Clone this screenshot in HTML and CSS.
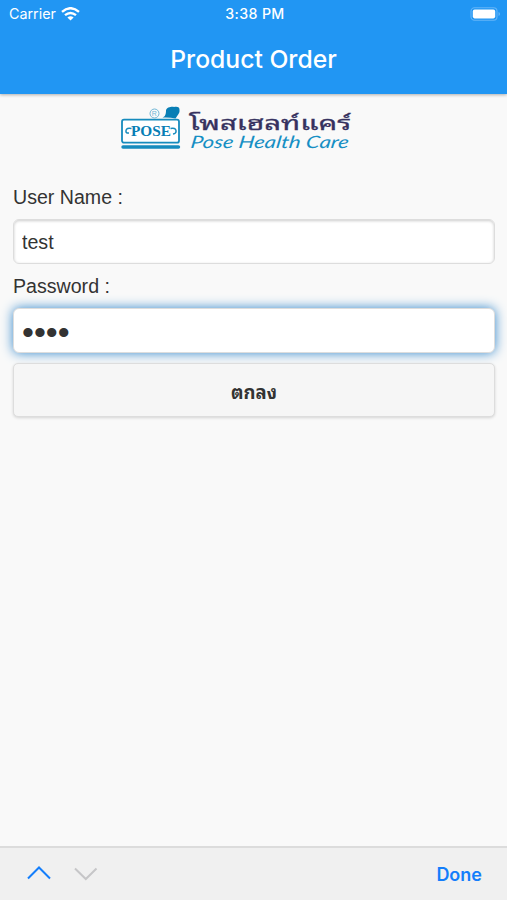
FILE: index.html
```html
<!DOCTYPE html>
<html lang="th">

<head>
  <meta charset="UTF-8">
  <meta name="viewport" content="width=device-width, initial-scale=1.0">
  <title>Product Order</title>
  <link rel="stylesheet" href="styles.css">
</head>

<body>
  <header class="header">
    <div class="status">
      <div class="carrier">
        <span>Carrier</span>
        <svg class="wifi" width="19" height="14" viewBox="0 0 19 14" fill="none" stroke="#fff" stroke-width="2.4">
          <path d="M1 4.8Q9.5 -2.4 18 4.8" />
          <path d="M4 8.2Q9.5 3.6 15 8.2" />
          <path d="M9.5 13.6L6.4 10.6Q9.5 8 12.6 10.6Z" fill="#fff" stroke="none" />
        </svg>
      </div>
      <span class="time">3:38 PM</span>
      <svg class="battery" width="31" height="14" viewBox="0 0 31 14">
        <rect x="1" y=".8" width="26" height="12.4" rx="3.5" fill="none" stroke="#64b5f8" stroke-width="1.1" />
        <rect x="2.8" y="2.6" width="22.4" height="8.8" rx="1.8" fill="#fff" />
        <path d="M28.5 5v4q1.6-.6 1.6-2t-1.6-2z" fill="#64b5f8" />
      </svg>
    </div>
    <h1 class="title">Product Order</h1>
  </header>

  <main class="content">
    <svg class="logo" width="234" height="48" viewBox="0 0 234 48">
      <rect x="3" y="15.7" width="57" height="23" rx="2" fill="#fff" stroke="#168bbd" stroke-width="1.8" />
      <path d="M4 43h55.500" stroke="#168bbd" stroke-width="3.400" stroke-linecap="round" />
      <path d="M43.500 13.500c3-1 3.500-4 3.500-7C47.500 3 53 2.500 55 3c3-1 6 0 5.500 3 .3 2-.5 3-1 4l-3 4.500q-6-1.500-13-1z" fill="#087eb5" />
      <circle cx="35.500" cy="9.500" r="4.500" fill="none" stroke="#71b7d6" />
      <text class="logo-mark" x="32.800" y="12.200">R</text>
      <text class="logo-pose" x="12" y="32" textLength="40" lengthAdjust="spacingAndGlyphs">POSE</text>
      <path d="M12.500 24.500q-5-1-5.500 2t3 2.500M51.500 24.500q5-1 5.500 2t-3 3.500" fill="none" stroke="#168bbd" stroke-width="1.500" />
      <text class="logo-thai" x="70" y="25.500" textLength="162" lengthAdjust="spacingAndGlyphs">โพสเฮลท์แคร์</text>
      <text class="logo-script" transform="translate(71 44) skewX(-8)" textLength="158" lengthAdjust="spacingAndGlyphs">Pose Health Care</text>
    </svg>

    <form class="login">
      <label for="username">User Name :</label>
      <input id="username" class="field" type="text" value="test">
      <label for="password">Password :</label>
      <input id="password" class="field focus" type="password" value="test">
      <button class="submit" type="button">ตกลง</button>
    </form>
  </main>

  <footer class="toolbar">
    <svg class="arrows" width="72" height="16" viewBox="0 0 72 16" fill="none" stroke-width="2">
      <path d="M1 12.500L12 1.500L23 12.500" stroke="#147efb" />
      <path d="M48 2.500L58.800 13L69.500 2.500" stroke="#c6c6c8" />
    </svg>
    <span class="done">Done</span>
  </footer>
</body>

</html>
```

FILE: styles.css
```css
* {
  box-sizing: border-box;
}

body {
  margin: 0;
  height: 100vh;
  display: flex;
  flex-direction: column;
  background: #f9f9f9;
  color: #333;
  font-family: "Liberation Sans", "Noto Sans Thai Looped", Loma, sans-serif;
}

.header {
  height: 94px;
  background: #2196f3;
  color: #fff;
  font-family: Inter, sans-serif;
  box-shadow: 0 1px 3px rgba(0, 0, 0, .3);
}

.status {
  display: grid;
  grid-template-columns: 1fr auto 1fr;
  align-items: center;
  height: 27px;
  padding: 0 6px 0 9px;
  font-size: 14.3px;
}

.carrier {
  display: flex;
  align-items: center;
  gap: 5px;
}

.time {
  font-size: 14.2px;
  font-weight: 500;
  letter-spacing: .35px;
}

.battery {
  justify-self: end;
}

.title {
  margin: 0;
  font-size: 24.7px;
  font-weight: 500;
  line-height: 65px;
  text-align: center;
}

.content {
  flex: 1;
  padding: 10px 12px 0 13px;
}

.logo {
  display: block;
  margin: 0 0 0 106px;
}

.logo-mark {
  fill: #71b7d6;
  font: 7px "Liberation Sans", sans-serif;
}

.logo-pose {
  fill: #087eb5;
  font: bold 14px "Liberation Serif", serif;
}

.logo-thai {
  fill: #35315f;
  font: 20px "Noto Sans Thai Looped", Loma, Waree, Garuda, "DejaVu Serif", serif;
  stroke: #35315f;
  stroke-width: .3px;
}

.logo-script {
  fill: #168fc4;
  font: italic 17px "Brush Script MT", Z003, "URW Chancery L", Lato, cursive;
}

.login {
  display: flex;
  flex-direction: column;
  padding-top: 33px;
}

label {
  height: 34px;
  font-size: 19.6px;
  line-height: 25px;
}

.field {
  height: 45px;
  margin: 0 0 10px;
  padding: 1px 8px 0;
  border: 1px solid #ddd;
  border-radius: 6px;
  background: #fff;
  box-shadow: inset 0 1px 3px rgba(0, 0, 0, .2);
  color: #333;
  font: 19.6px "Liberation Sans", sans-serif;
  outline: none;
}

.focus {
  padding-top: 3px;
  box-shadow: 0 0 12px #3388cc;
  font-size: 34px;
}

.submit {
  height: 54px;
  padding-top: 1px;
  border: 1px solid #ddd;
  border-radius: 5px;
  background: #f6f6f6;
  box-shadow: 0 1px 3px rgba(0, 0, 0, .15);
  color: #333;
  font: bold 18.5px "Liberation Sans", "Noto Sans Thai Looped", Loma, Waree, sans-serif;
}

.toolbar {
  display: flex;
  align-items: center;
  justify-content: space-between;
  height: 54px;
  padding: 0 25px 0 27px;
  border-top: 2px solid #dcdcdc;
  background: #f0f0f0;
}

.done {
  color: #147efb;
  font: 600 18px Inter, sans-serif;
}
```
